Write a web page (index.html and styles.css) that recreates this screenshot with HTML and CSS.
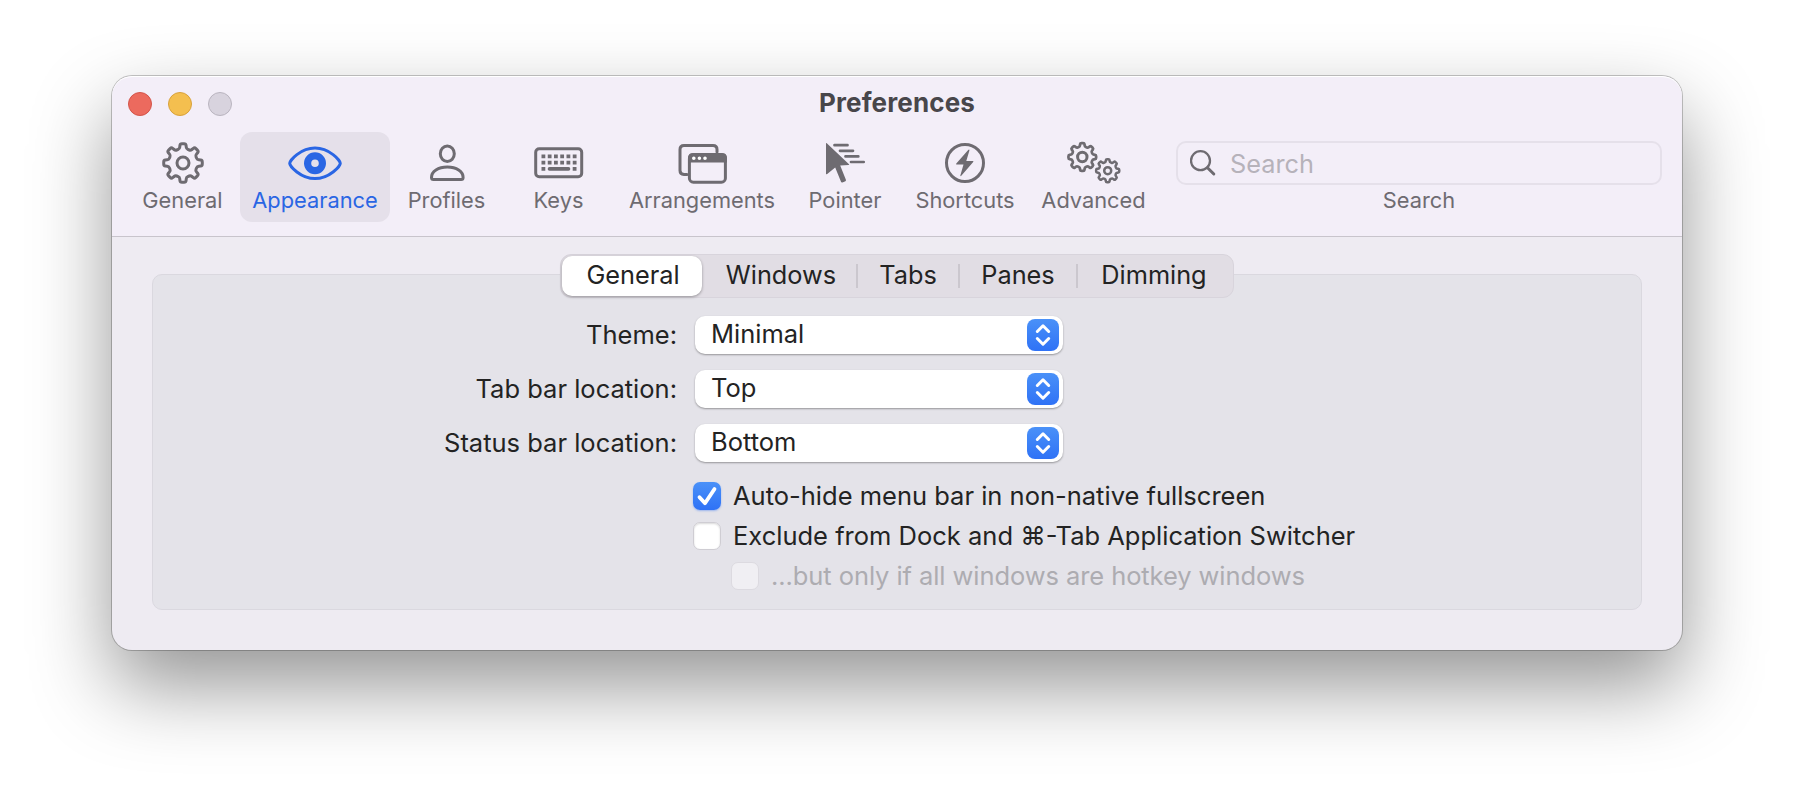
FILE: index.html
```
<!DOCTYPE html>
<html lang="en">
<head>
    <meta charset="UTF-8">
    <meta name="viewport" content="width=device-width, initial-scale=1.0">
    <title>Preferences</title>
    <link rel="stylesheet" href="styles.css">
</head>
<body>
    <div class="window">
        <header class="header">
            <div class="titlebar">
                <div class="lights">
                    <span class="light close"></span>
                    <span class="light minimize"></span>
                    <span class="light zoom"></span>
                </div>
                <h1 class="title">Preferences</h1>
            </div>
            <nav class="toolbar">
                <a class="tool tool-general">
                    <svg class="icon" width="60" height="44" viewBox="0 0 60 44">
                        <path class="gear" d=""/>
                        <circle cx="30" cy="22" r="6"/>
                    </svg>
                    <span class="tool-label">General</span>
                </a>
                <a class="tool tool-appearance active">
                    <svg class="icon" width="60" height="44" viewBox="0 0 60 44">
                        <path d="M4.700 22.300C4.700 19.500 15.500 7 30 7s25.300 12.500 25.300 15.300S44.500 37.600 30 37.600 4.700 25.100 4.700 22.300z"/>
                        <circle class="iris" cx="30" cy="22.300" r="7.400"/>
                    </svg>
                    <span class="tool-label">Appearance</span>
                </a>
                <a class="tool tool-profiles">
                    <svg class="icon" width="60" height="44" viewBox="0 0 60 44">
                        <ellipse cx="30.300" cy="12.700" rx="7" ry="7.700"/>
                        <path d="M16.500 38.400h27.600q2 0 2-2C46.100 30.500 39.500 26 30.300 26s-15.800 4.500-15.800 10.400q0 2 2 2z"/>
                    </svg>
                    <span class="tool-label">Profiles</span>
                </a>
                <a class="tool tool-keys">
                    <svg class="icon" width="60" height="44" viewBox="0 0 60 44">
                        <rect x="6.700" y="7.700" width="46" height="28" rx="3.500"/>
                        <path class="keys" d="M12.500 15.300h36M12.500 21.600h36M12.500 27.900h4M43.700 27.900h4"/>
                        <path class="space" d="M20.500 27.900h19"/>
                    </svg>
                    <span class="tool-label">Keys</span>
                </a>
                <a class="tool tool-arrangements">
                    <svg class="icon" width="60" height="44" viewBox="0 0 60 44">
                        <path d="M15 33.500h-3q-4-.200-4-4V8.500q0-4 4-4h29q4 0 4 4v2.500"/>
                        <rect x="17.400" y="13.700" width="36" height="27.500" rx="4"/>
                        <path class="solid" d="M16 21.500V17q0-5 5-5h29q5 0 5 5v4.500z"/>
                        <path class="dots" d="M21.800 17.200h.01M27.400 17.200h.01M33 17.200h.01"/>
                    </svg>
                    <span class="tool-label">Arrangements</span>
                </a>
                <a class="tool tool-pointer">
                    <svg class="icon" width="60" height="44" viewBox="0 0 60 44">
                        <path class="solid" d="M11 2.500q0-1 .8-.3L34 23.300q.6.700-.4.800l-8.400.500 5.700 14.200q.4 1-.5 1.400l-3 1.200q-1 .3-1.400-.6l-5.800-14.200-8 6.300q-1.200.8-1.200-.5z"/>
                        <path class="trail" d="M19.500 4.200h13M25 9.800h13M30.500 15.400h12.800M36 21h12.700"/>
                    </svg>
                    <span class="tool-label">Pointer</span>
                </a>
                <a class="tool tool-shortcuts">
                    <svg class="icon" width="60" height="44" viewBox="0 0 60 44">
                        <circle cx="30" cy="22" r="18.500"/>
                        <path class="solid" d="M33.200 8.900L21.300 22.600q-.7 1 .3 1h6.900L25.400 34.200q-.2 1.600.9.600L38.200 21.100q.7-1-.3-1h-6.600L34.400 9.500q.2-1.600-1.200-.6z"/>
                    </svg>
                    <span class="tool-label">Shortcuts</span>
                </a>
                <a class="tool tool-advanced">
                    <svg class="icon" width="60" height="44" viewBox="0 0 60 44">
                        <path class="gear-large" d=""/>
                        <circle cx="18.300" cy="16" r="4.700"/>
                        <path class="gear-small" d=""/>
                        <circle class="hub-small" cx="43.700" cy="29.700" r="3.500"/>
                    </svg>
                    <span class="tool-label">Advanced</span>
                </a>
                <div class="tool tool-search">
                    <div class="search">
                        <svg width="28" height="28" viewBox="0 0 28 28">
                            <circle cx="10.500" cy="11.700" r="9.500"/>
                            <path class="handle" d="M17.500 18.700l6.300 6.300"/>
                        </svg>
                        <span class="placeholder">Search</span>
                    </div>
                    <span class="tool-label">Search</span>
                </div>
            </nav>
        </header>

        <main class="content">
            <div class="tabs">
                <button class="tab tab-general selected">General</button>
                <button class="tab tab-windows">Windows</button>
                <button class="tab tab-tabs">Tabs</button>
                <button class="tab tab-panes">Panes</button>
                <button class="tab tab-dimming">Dimming</button>
            </div>
            <section class="panel">
                <div class="row">
                    <span class="label">Theme:</span>
                    <div class="select">
                        <span class="value">Minimal</span>
                        <span class="arrows"><svg width="32" height="32" viewBox="0 0 32 32"><path d="M10.300 12.500L16 6.800l5.700 5.700M10.300 19.500l5.700 5.700 5.700-5.700"/></svg></span>
                    </div>
                </div>
                <div class="row">
                    <span class="label">Tab bar location:</span>
                    <div class="select">
                        <span class="value">Top</span>
                        <span class="arrows"><svg width="32" height="32" viewBox="0 0 32 32"><path d="M10.300 12.500L16 6.800l5.700 5.700M10.300 19.500l5.700 5.700 5.700-5.700"/></svg></span>
                    </div>
                </div>
                <div class="row">
                    <span class="label">Status bar location:</span>
                    <div class="select">
                        <span class="value">Bottom</span>
                        <span class="arrows"><svg width="32" height="32" viewBox="0 0 32 32"><path d="M10.300 12.500L16 6.800l5.700 5.700M10.300 19.500l5.700 5.700 5.700-5.700"/></svg></span>
                    </div>
                </div>
                <div class="checks">
                    <div class="check">
                        <span class="box checked"><svg width="28" height="28" viewBox="0 0 28 28"><path d="M6.500 15.200l5.500 6L21.500 7"/></svg></span>
                        <span class="check-label">Auto-hide menu bar in non-native fullscreen</span>
                    </div>
                    <div class="check">
                        <span class="box"></span>
                        <span class="check-label">Exclude from Dock and ⌘-Tab Application Switcher</span>
                    </div>
                    <div class="check disabled">
                        <span class="box"></span>
                        <span class="check-label">...but only if all windows are hotkey windows</span>
                    </div>
                </div>
            </section>
        </main>
    </div>
    <script src="script.js"></script>
</body>
</html>
```
FILE: styles.css
```
* {
    box-sizing: border-box;
}

body {
    margin: 0;
    padding: 76px 112px 0;
    height: 798px;
    overflow: hidden;
    background: white;
    font-family: Inter, "Liberation Sans", sans-serif;
    color: #232323;
}

.window {
    height: 574px;
    border-radius: 20px;
    background: #eeebf2;
    overflow: hidden;
    box-shadow: 0 0 0 1px rgba(0, 0, 0, 0.22), 0 36px 80px rgba(0, 0, 0, 0.42);
}

.header {
    height: 161px;
    background: #f3eef8;
    border-bottom: 1px solid #c8c4cc;
    border-radius: 20px 20px 0 0;
    box-shadow: inset 0 1px 0 white;
}

.titlebar {
    display: flex;
    align-items: center;
    height: 56px;
    padding: 0 16px;
}

.lights {
    display: flex;
    gap: 16px;
    width: 200px;
}

.light {
    width: 24px;
    height: 24px;
    border-radius: 50%;
    border: 1px solid;
}

.close {
    background: #ec6a5e;
    border-color: #d3544a;
}

.minimize {
    background: #f4bf4f;
    border-color: #d8a13c;
}

.zoom {
    background: #d8d3de;
    border-color: #b9b4bf;
}

.title {
    flex: 1;
    margin: 0 200px 2px 0;
    font-size: 26px;
    font-weight: 700;
    line-height: 30px;
    letter-spacing: 0.15px;
    text-align: center;
    color: #48464a;
}

.toolbar {
    display: flex;
    padding-left: 13px;
}

.tool {
    display: flex;
    flex-direction: column;
    align-items: center;
    height: 90px;
    padding-top: 9px;
    color: #6e6b71;
}

.tool-general { width: 115px; }
.tool-appearance { width: 150px; }
.tool-profiles { width: 113px; }
.tool-keys { width: 111px; }
.tool-arrangements { width: 176px; }
.tool-pointer { width: 110px; }
.tool-shortcuts { width: 130px; }
.tool-advanced { width: 127px; }

.tool.active {
    background: #e5e0ea;
    border-radius: 12px;
    color: #2a66e4;
}

.tool svg {
    flex: none;
    fill: none;
    stroke: currentColor;
    stroke-width: 3;
    stroke-linecap: round;
    stroke-linejoin: round;
}

.tool .solid {
    fill: currentColor;
    stroke: none;
}

.tool .iris {
    stroke-width: 7.2;
}

.tool .keys {
    stroke-width: 3.8;
    stroke-dasharray: 3.8 2.45;
    stroke-linecap: butt;
}

.tool .space {
    stroke-width: 3.6;
}

.tool .dots {
    stroke: white;
    stroke-width: 3.6;
}

.tool .trail,
.tool .gear-large {
    stroke-width: 2.7;
}

.tool .gear-small,
.tool .hub-small {
    stroke-width: 2.5;
}

.tool-label {
    margin-top: 2px;
    font-size: 21.8px;
    line-height: 26px;
    white-space: nowrap;
}

.tool-search {
    width: 486px;
    margin-left: 19px;
}

.search {
    display: flex;
    align-items: center;
    gap: 12px;
    width: 486px;
    height: 44px;
    padding-left: 12px;
    border: 2px solid #e5e0ea;
    border-radius: 10px;
}

.search svg {
    stroke-width: 2.3;
}

.search .handle {
    stroke-width: 3;
}

.placeholder {
    font-size: 25.3px;
    color: #b6b2ba;
}

.content {
    display: flex;
    flex-direction: column;
    align-items: center;
    padding: 17px 40px 0;
}

.tabs {
    position: relative;
    display: flex;
    width: 674px;
    height: 44px;
    padding: 1px;
    border: 1px solid #d8d4dc;
    border-radius: 11px;
    background: #e1dde4;
}

.tab {
    display: flex;
    align-items: center;
    justify-content: center;
    height: 40px;
    padding: 0 0 4px 2px;
    border: none;
    background: none;
    font: 25.3px Inter, sans-serif;
    color: #232323;
}

.tab.selected {
    background: white;
    border-radius: 10px;
    box-shadow: 0 1px 3px rgba(0, 0, 0, 0.35);
}

.tab-general { width: 140px; }
.tab-windows { width: 154px; padding-left: 4px; }
.tab-tabs { width: 102px; }
.tab-panes { width: 118px; }
.tab-dimming { width: 154px; }

.tab-tabs,
.tab-panes,
.tab-dimming {
    background: linear-gradient(#cbc7ce, #cbc7ce) left center / 2px 24px no-repeat;
}

.panel {
    width: 1490px;
    height: 336px;
    margin-top: -24px;
    padding-top: 41px;
    border: 1px solid #dad8df;
    border-radius: 10px;
    background: #e4e3e9;
}

.row {
    display: flex;
    align-items: center;
    height: 38px;
    margin-bottom: 16px;
    font-size: 25.5px;
}

.label {
    width: 524px;
    margin: 0 18px 2px 0;
    text-align: right;
    white-space: nowrap;
}

.select {
    display: flex;
    align-items: center;
    justify-content: space-between;
    width: 368px;
    height: 38px;
    padding: 0 4px 0 16px;
    border-radius: 10px;
    background: white;
    box-shadow: 0 1px 2px rgba(0, 0, 0, 0.35);
}

.value {
    margin-bottom: 4px;
}

.arrows {
    width: 32px;
    height: 32px;
    border-radius: 8px;
    background: linear-gradient(#4a91f8, #2f72f6);
}

.arrows svg,
.box svg {
    display: block;
    fill: none;
    stroke: white;
    stroke-width: 3;
    stroke-linecap: round;
    stroke-linejoin: round;
}

.checks {
    margin-top: -2px;
    padding-left: 540px;
}

.check {
    display: flex;
    align-items: center;
    height: 40px;
    gap: 12px;
    font-size: 25.5px;
    white-space: nowrap;
}

.check-label {
    margin-bottom: 2px;
}

.box {
    width: 28px;
    height: 28px;
    border-radius: 7px;
    background: white;
    border: 1px solid #cfcdd3;
    box-shadow: inset 0 1px 2px rgba(0, 0, 0, 0.15);
}

.box.checked {
    border: none;
    background: linear-gradient(#4a91f8, #2f72f6);
    box-shadow: 0 1px 2px rgba(47, 114, 246, 0.4);
}

.box svg {
    stroke-width: 3.8;
}

.disabled {
    padding-left: 38px;
    letter-spacing: -0.08px;
    color: #adacb1;
}

.disabled .box {
    background: #f0eff3;
    border-color: #dcdae0;
    box-shadow: none;
}
```
FILE: script.js
```
function gearPath(cx, cy, outer, inner) {
    const teeth = 8;
    const step = Math.PI * 2 / teeth;
    const points = [];
    for (let i = 0; i < teeth; i++) {
        const a = i * step - Math.PI / 2;
        [[-0.3, inner], [-0.19, outer], [0.19, outer], [0.3, inner]].forEach(([t, r]) => {
            points.push([cx + Math.cos(a + t * step) * r, cy + Math.sin(a + t * step) * r]);
        });
    }
    // round each corner with a short curve
    let d = "";
    points.forEach((p, i) => {
        const prev = points[(i + points.length - 1) % points.length];
        const next = points[(i + 1) % points.length];
        const k = 0.32;
        const a = [p[0] + (prev[0] - p[0]) * k, p[1] + (prev[1] - p[1]) * k];
        const b = [p[0] + (next[0] - p[0]) * k, p[1] + (next[1] - p[1]) * k];
        d += `${i ? "L" : "M"}${a[0].toFixed(2)} ${a[1].toFixed(2)}Q${p[0].toFixed(2)} ${p[1].toFixed(2)} ${b[0].toFixed(2)} ${b[1].toFixed(2)}`;
    });
    return d + "z";
}

document.querySelector(".gear").setAttribute("d", gearPath(30, 22, 19.5, 14.6));
document.querySelector(".gear-large").setAttribute("d", gearPath(18.3, 16, 14, 10.7));
document.querySelector(".gear-small").setAttribute("d", gearPath(43.7, 29.7, 11.7, 8.9));
```
